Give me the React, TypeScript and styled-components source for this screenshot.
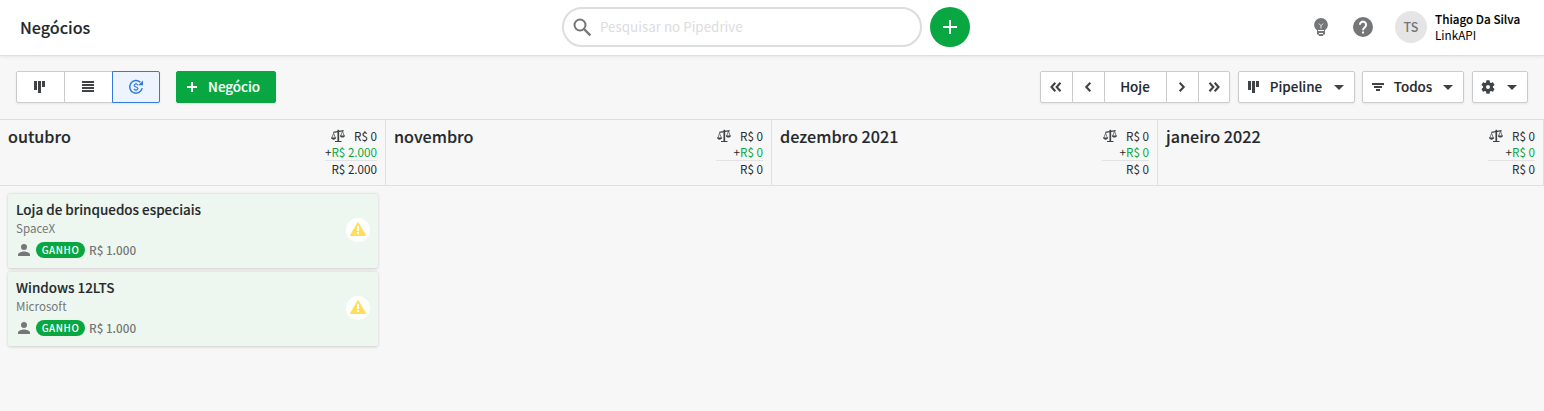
import React from 'react';
import styled, { createGlobalStyle, css } from 'styled-components';

const Global = createGlobalStyle`
  * { box-sizing: border-box; }
  body { margin: 0; background: #f7f7f7; color: #26292c; font-family: "Noto Sans CJK SC", "Source Sans Pro", sans-serif; font-size: 13.5px; }
  svg { display: block; flex: none; }
  button, input { font: inherit; color: inherit; margin: 0; }
`;

const semibold = css`
  font-weight: 500;
  -webkit-text-stroke: 0.12px currentColor;
`;

const Page = styled.div`
  min-height: 411px;
  display: flex;
  flex-direction: column;
`;

const Header = styled.header`
  height: 56px;
  background: #fff;
  border-bottom: 1px solid #e0e0e0;
  box-shadow: 0 1px 3px rgba(38, 41, 44, 0.08);
  display: grid;
  grid-template-columns: 562px 360px 48px 1fr;
  align-items: center;
`;

const Title = styled.h1`
  margin: -2px 0 0 20px;
  font-size: 16.1px;
  line-height: 24px;
  ${semibold}
`;

const Search = styled.label`
  height: 40px;
  border: 2px solid #dcdddd;
  border-radius: 20px;
  display: flex;
  align-items: center;
  padding-left: 6px;
  gap: 6px;
  margin-top: -1px;
`;

const SearchInput = styled.input`
  border: 0;
  outline: 0;
  padding: 0;
  flex: 1;
  min-width: 0;
  margin: -2px 16px 0 0;
  background: transparent;
  font-size: 13.4px;
  line-height: 20px;
  height: 20px;
  &::placeholder { color: #dcdddd; opacity: 1; }
`;

const AddButton = styled.button`
  width: 40px;
  height: 40px;
  border: 0;
  border-radius: 50%;
  background: #08a742;
  color: #fff;
  display: flex;
  align-items: center;
  justify-content: center;
  padding: 0;
  margin: -1px 0 0 8px;
`;

const Account = styled.div`
  display: flex;
  align-items: center;
  justify-content: flex-end;
  padding-right: 24px;
  color: #747678;
  margin-top: -1px;
`;

const HelpIcon = styled.span`
  margin: 0 22px 0 25px;
`;

const Avatar = styled.span`
  width: 32px;
  height: 32px;
  border-radius: 50%;
  background: #e5e5e5;
  font-size: 12.5px;
  line-height: 31px;
  text-align: center;
  font-weight: 500;
`;

const User = styled.div`
  margin-left: 8px;
  width: 85px;
  font-size: 11.7px;
  line-height: 16px;
  white-space: nowrap;
  color: #000;
`;

const UserName = styled.div`
  ${semibold}
`;

const Toolbar = styled.div`
  height: 63px;
  padding: 15px 16px 0;
  display: flex;
  align-items: flex-start;
`;

const Group = styled.div`
  display: flex;
  border-radius: 2px;
  box-shadow: 0 1px 2px rgba(38, 41, 44, 0.08);
`;

const Spacer = styled.div`
  flex: 1;
`;

const Button = styled.button<{ $w: number; $active?: boolean; $primary?: boolean; $shift?: number }>`
  width: ${(p) => p.$w}px;
  height: 32px;
  padding: 0 ${(p) => p.$shift ?? 0}px 0 0;
  border: 1px solid #cbcccd;
  background: #fff;
  display: flex;
  align-items: center;
  justify-content: center;
  font-size: 13.4px;
  line-height: 20px;
  color: #26292c;
  ${semibold}
  & + & { margin-left: -1px; }
  &:first-child { border-radius: 2px 0 0 2px; }
  &:last-child { border-radius: 0 2px 2px 0; }
  &:only-child { border-radius: 2px; }
  ${(p) => p.$active && css`
    border-color: #317ae2;
    background: #edf4fd;
    color: #317ae2;
    position: relative;
  `}
  ${(p) => p.$primary && css`
    border-color: #08a742;
    background: #08a742;
    color: #fff;
  `}
`;

const Single = styled(Group)<{ $ml: number }>`
  margin-left: ${(p) => p.$ml}px;
`;

const Label = styled.span<{ $l: number; $r?: number }>`
  margin: -2px ${(p) => p.$r ?? 0}px 0 ${(p) => p.$l}px;
`;

const Board = styled.main`
  display: grid;
  grid-template-columns: repeat(4, 386px);
  border-top: 1px solid #dcdcdd;
`;

const ColumnHead = styled.div`
  height: 66px;
  padding: 8px 8px 0;
  border-right: 1px solid #e0e0e1;
  border-bottom: 1px solid #e0e0e1;
  display: flex;
  justify-content: space-between;
`;

const Month = styled.h2`
  margin: -4px 0 0;
  font-size: 16.15px;
  line-height: 24px;
  ${semibold}
`;

const Totals = styled.div`
  min-width: 47px;
  font-size: 11.65px;
  line-height: 16px;
  text-align: right;
  align-self: flex-start;
`;

const TotalRow = styled.div`
  display: flex;
  justify-content: flex-end;
  gap: 9px;
  height: 16px;
`;

const Gain = styled.div`
  height: 17px;
  border-bottom: 1px solid #e3e3e4;
`;

const Green = styled.span`
  color: #08a742;
`;

const Cards = styled.div`
  padding: 8px 8px 0;
  display: flex;
  flex-direction: column;
  gap: 4px;
`;

const Card = styled.article`
  height: 74px;
  padding: 5px 8px;
  display: flex;
  align-items: flex-start;
  justify-content: space-between;
  background: #edf7f0;
  border-radius: 2px;
  box-shadow: 0 0.5px 3px rgba(38, 41, 44, 0.2);
`;

const CardTitle = styled.div`
  font-size: 13.45px;
  line-height: 20px;
  ${semibold}
`;

const Org = styled.div`
  margin-top: 1px;
  font-size: 11.6px;
  line-height: 16px;
  color: #747678;
`;

const Meta = styled.div`
  display: flex;
  align-items: center;
  height: 16px;
  margin-top: 6px;
  color: #747678;
  font-size: 11.7px;
  line-height: 16px;
  font-weight: 500;
`;

const Badge = styled.span`
  width: 49px;
  height: 16px;
  border-radius: 8px;
  margin: 0 4px;
  background: #08a742;
  color: #fff;
  font-size: 9.8px;
  letter-spacing: 0.6px;
  text-align: center;
`;

const Warning = styled.span`
  width: 24px;
  height: 24px;
  margin-top: 19px;
  border-radius: 50%;
  background: #fff;
  display: flex;
  align-items: center;
  justify-content: center;
  padding-bottom: 2px;
`;

const ICON = '#3f4346';

const KanbanIcon = () => (
  <svg width="12" height="12" fill={ICON} shapeRendering="crispEdges"><path d="M0 0h3v9H0zM4 0h3v12H4zM8 0h3v6H8z" /></svg>
);
const ListIcon = () => (
  <svg width="12" height="12" fill={ICON} shapeRendering="crispEdges"><path d="M0 0h12v2H0zM0 3h12v2H0zM0 6h12v2H0zM0 9h12v2H0z" /></svg>
);
const ForecastIcon = () => (
  <svg width="16" height="16" fill="none" stroke="currentColor" strokeWidth="1.5">
    <path d="M12.4 3.3A6.300 6.300 0 1 0 14.200 9.200" />
    <path d="M15 1.400v4.800H10.200z" fill="currentColor" stroke="none" />
    <path d="M10 6.2C9.600 5.300 8.900 5 8 5 6.900 5 6.100 5.500 6.100 6.400c0 2.100 3.900 1.100 3.900 3.200C10 10.500 9.200 11 8 11c-1 0-1.800-.4-2.100-1.300M8 3.700V5M8 11v1.300" strokeWidth="1.2" />
  </svg>
);
const PlusIcon = ({ size, weight }: { size: number; weight: number }) => (
  <svg width={size} height={size} viewBox={`0 0 ${size} ${size}`} stroke="currentColor" strokeWidth={weight}>
    <path d={`M${size / 2} 0V${size}M0 ${size / 2}H${size}`} />
  </svg>
);
const Chevrons = ({ double, right }: { double?: boolean; right?: boolean }) => (
  <svg width={double ? 12 : 8} height="10" fill="none" stroke={ICON} strokeWidth="2.1" transform={right ? 'scale(-1 1)' : undefined}>
    <path d={double ? 'M5.300.8 1.500 5l3.800 4.200M10.500.8 6.700 5l3.800 4.200' : 'M6.300.8 2.300 5l4 4.200'} />
  </svg>
);
const Caret = () => (
  <svg width="10" height="5" fill={ICON}><path d="M0 0h10L5 5z" /></svg>
);
const FilterIcon = () => (
  <svg width="12" height="8" fill={ICON} shapeRendering="crispEdges"><path d="M0 0h12v2H0zM2 3h8v2H2zM4 6h4v2H4z" /></svg>
);
const GearIcon = () => (
  <svg width="16" height="16" viewBox="0 0 24 24" fill={ICON}>
    <path d="M19.430 12.980c.04-.32.07-.64.07-.98s-.03-.66-.07-.98l2.110-1.650c.19-.15.24-.42.12-.64l-2-3.460c-.12-.22-.39-.3-.61-.22l-2.490 1c-.52-.4-1.080-.73-1.690-.98l-.38-2.650C14.460 2.180 14.250 2 14 2h-4c-.25 0-.46.18-.49.42l-.38 2.650c-.61.25-1.170.59-1.690.98l-2.490-1c-.23-.09-.49 0-.61.22l-2 3.460c-.13.22-.07.49.12.64l2.110 1.650c-.04.32-.07.65-.07.98s.03.66.07.98l-2.110 1.650c-.19.15-.24.42-.12.64l2 3.460c.12.22.39.3.61.22l2.490-1c.52.4 1.080.73 1.690.98l.38 2.650c.03.24.24.42.49.42h4c.25 0 .46-.18.49-.42l.38-2.650c.61-.25 1.170-.59 1.690-.98l2.490 1c.23.09.49 0 .61-.22l2-3.460c.12-.22.07-.49-.12-.64l-2.110-1.650zM12 15a3 3 0 1 1 0-6 3 3 0 0 1 0 6z" />
  </svg>
);
const SearchIcon = () => (
  <svg width="24" height="24" fill="none" stroke="#747678" strokeWidth="2">
    <circle cx="10" cy="10" r="5.500" /><path d="m14 14 6.300 6.300" strokeWidth="2.400" />
  </svg>
);
const BulbIcon = () => (
  <svg width="14" height="20" fill="#747678">
    <path d="M7 .9a6.900 6.900 0 0 0-6.900 6.900c0 2.700 1.400 4.300 2.900 5.400V14h8v-.8c1.500-1.100 2.900-2.700 2.900-5.400A6.900 6.900 0 0 0 7 .9z" />
    <path d="M3 13h8v4.500H9.500L9 19H5l-.5-1.500H3z" />
    <path d="M4.900 6.500 7 8.800l2.100-2.300M7 8.800v2.700" stroke="#fff" strokeOpacity=".8" fill="none" />
    <path d="M4 13.500h6M5 16.500h4" stroke="#fff" />
  </svg>
);
const QuestionIcon = () => (
  <svg width="20" height="20">
    <circle cx="10" cy="10" r="10" fill="#747678" />
    <path d="M6.900 7.800a3.100 3.100 0 1 1 5 2.400c-1.100.9-1.900 1.400-1.900 3" fill="none" stroke="#fff" strokeWidth="2" />
    <path d="M9 14.500h2v2H9z" fill="#fff" />
  </svg>
);
const ScaleIcon = () => (
  <svg width="14" height="16" fill="none" stroke={ICON}>
    <path d="M7.300 1.800v11.500" strokeWidth="1.700" />
    <path d="M4 13.500h6.500M2.300 4.400 12.600 2.600" strokeWidth="1.100" />
    <path d="M.8 10 2.600 5.200 4.400 10M9.600 8l1.900-4.800L13.200 8" strokeWidth=".7" />
    <path d="M0 9.600h5.200c-.3 2.800-4.900 2.800-5.200 0zM8.800 7.400H14c-.3 2.800-4.900 2.800-5.200 0z" fill={ICON} stroke="none" />
  </svg>
);
const PersonIcon = () => (
  <svg width="16" height="16" fill="#747678"><circle cx="8" cy="5" r="3" /><path d="M2 14v-1.500C2 10.500 6 9.500 8 9.500s6 1 6 3V14z" /></svg>
);
const WarningIcon = () => (
  <svg width="16" height="14"><path d="M8 .7 15.400 13.400H.6z" fill="#ffdf5a" stroke="#ffdf5a" strokeLinejoin="round" strokeWidth="1.200" /><path d="M7 4h2v5H7zM7 10h2v2H7z" fill="#fff" /></svg>
);

const columns = [
  { month: 'outubro', gain: 'R$ 2.000', total: 'R$ 2.000' },
  { month: 'novembro', gain: 'R$ 0', total: 'R$ 0' },
  { month: 'dezembro 2021', gain: 'R$ 0', total: 'R$ 0' },
  { month: 'janeiro 2022', gain: 'R$ 0', total: 'R$ 0' },
];

const deals = [
  { title: 'Loja de brinquedos especiais', org: 'SpaceX', value: 'R$ 1.000' },
  { title: 'Windows 12LTS', org: 'Microsoft', value: 'R$ 1.000' },
];

export default function App() {
  return (
    <Page>
      <Global />
      <Header>
        <Title>Negócios</Title>
        <Search><SearchIcon /><SearchInput placeholder="Pesquisar no Pipedrive" /></Search>
        <AddButton><PlusIcon size={14} weight={2} /></AddButton>
        <Account>
          <BulbIcon />
          <HelpIcon><QuestionIcon /></HelpIcon>
          <Avatar>TS</Avatar>
          <User><UserName>Thiago Da Silva</UserName>LinkAPI</User>
        </Account>
      </Header>
      <Toolbar>
        <Group>
          <Button $w={49} $shift={1}><KanbanIcon /></Button>
          <Button $w={49} $shift={1}><ListIcon /></Button>
          <Button $w={48} $active><ForecastIcon /></Button>
        </Group>
        <Single $ml={16}>
          <Button $w={100} $primary><PlusIcon size={10} weight={2} /><Label $l={10.6} $r={4.4}>Negócio</Label></Button>
        </Single>
        <Spacer />
        <Group>
          <Button $w={33} $shift={1}><Chevrons double /></Button>
          <Button $w={33} $shift={1}><Chevrons /></Button>
          <Button $w={63} $shift={1}><Label $l={0}>Hoje</Label></Button>
          <Button $w={33} $shift={1}><Chevrons right /></Button>
          <Button $w={32}><Chevrons double right /></Button>
        </Group>
        <Single $ml={8}>
          <Button $w={117} $shift={1}><KanbanIcon /><Label $l={10} $r={12}>Pipeline</Label><Caret /></Button>
        </Single>
        <Single $ml={7}>
          <Button $w={102} $shift={1}><FilterIcon /><Label $l={10} $r={11}>Todos</Label><Caret /></Button>
        </Single>
        <Single $ml={8}>
          <Button $w={56} $shift={4}><GearIcon /><Label $l={11} /><Caret /></Button>
        </Single>
      </Toolbar>
      <Board>
        {columns.map((c, i) => (
          <section key={c.month}>
            <ColumnHead>
              <Month>{c.month}</Month>
              <Totals>
                <TotalRow><ScaleIcon />R$ 0</TotalRow>
                <Gain>+<Green>{c.gain}</Green></Gain>
                {c.total}
              </Totals>
            </ColumnHead>
            {i === 0 && (
              <Cards>
                {deals.map((d) => (
                  <Card key={d.title}>
                    <div>
                      <CardTitle>{d.title}</CardTitle>
                      <Org>{d.org}</Org>
                      <Meta><PersonIcon /><Badge>GANHO</Badge>{d.value}</Meta>
                    </div>
                    <Warning><WarningIcon /></Warning>
                  </Card>
                ))}
              </Cards>
            )}
          </section>
        ))}
      </Board>
    </Page>
  );
}
